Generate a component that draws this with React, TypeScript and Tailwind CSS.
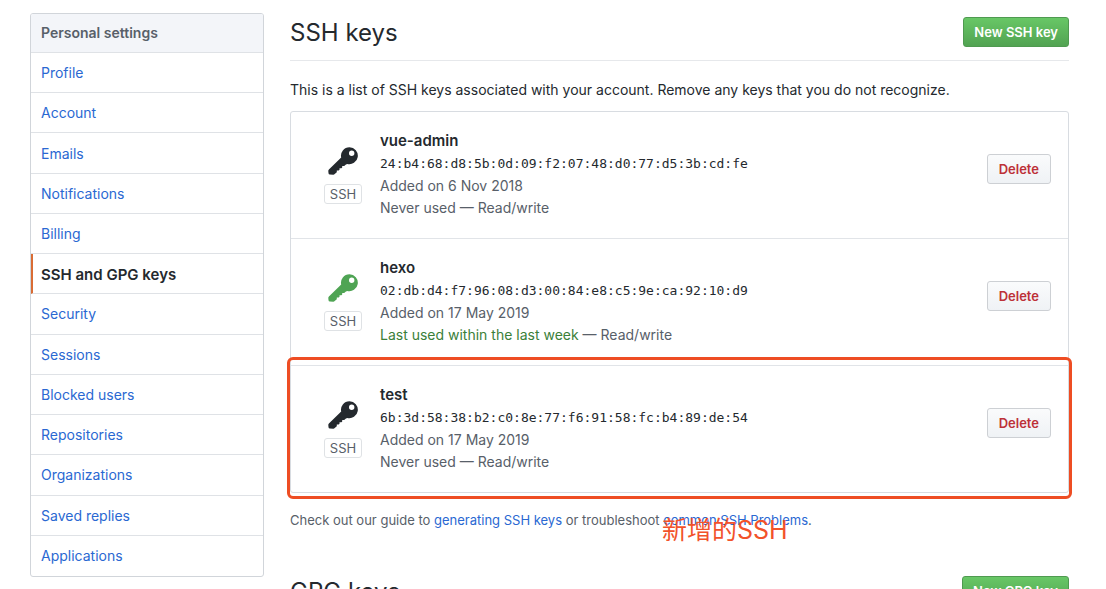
const navItems = [
  "Profile",
  "Account",
  "Emails",
  "Notifications",
  "Billing",
  "SSH and GPG keys",
  "Security",
  "Sessions",
  "Blocked users",
  "Repositories",
  "Organizations",
  "Saved replies",
  "Applications",
];

type SshKey = {
  name: string;
  fingerprint: string;
  added: string;
  lastUsed: string;
  recent?: boolean;
  note?: string;
};

const sshKeys: SshKey[] = [
  {
    name: "vue-admin",
    fingerprint: "24:b4:68:d8:5b:0d:09:f2:07:48:d0:77:d5:3b:cd:fe",
    added: "Added on 6 Nov 2018",
    lastUsed: "Never used",
  },
  {
    name: "hexo",
    fingerprint: "02:db:d4:f7:96:08:d3:00:84:e8:c5:9e:ca:92:10:d9",
    added: "Added on 17 May 2019",
    lastUsed: "Last used within the last week",
    recent: true,
  },
  {
    name: "test",
    fingerprint: "6b:3d:58:38:b2:c0:8e:77:f6:91:58:fc:b4:89:de:54",
    added: "Added on 17 May 2019",
    lastUsed: "Never used",
    note: "新增的SSH",
  },
];

function KeyIcon({ className }: { className: string }) {
  return (
    <svg viewBox="0 0 30 28" width="30" height="28" fill="currentColor" className={className} aria-hidden="true">
      <path
        fillRule="evenodd"
        d="M21.5 0.2a8.5 8.5 0 0 0-8.3 10.4L0.9 22.4a2 2 0 0 0-.6 1.6l.2 2.2a1.6 1.6 0 0 0 1.4 1.4l3.4.1a2 2 0 0 0 1.4-.6l2.1-1.9v-1.6h1.9l.8-.8v-1.5h1.9l.8-.9v-1.3h2l1.4-1.3 1.5-.9A8.5 8.5 0 1 0 21.5 0.2zM23.7 3.6a2.7 2.7 0 1 1 0 5.4a2.7 2.7 0 0 1 0-5.4z"
      />
    </svg>
  );
}

function SectionHeader({ title, action }: { title: string; action: string }) {
  return (
    <div className="flex items-start justify-between border-b border-[#e6e8eb] pb-[11px]">
      <h2 className="text-2xl leading-8">{title}</h2>
      <button
        type="button"
        className="h-[30px] rounded-[3px] border border-[#4f9a50] bg-linear-to-b from-[#68c766] to-[#52a352] px-[10px] pb-px text-[13px] leading-5 font-semibold text-white"
      >
        {action}
      </button>
    </div>
  );
}

function KeyRow({ item }: { item: SshKey }) {
  return (
    <li className="relative flex items-center pr-[17px] pl-[33px]">
      <div className="flex w-[38px] flex-col items-center gap-[9px]">
        <KeyIcon className={item.recent ? "text-[#4fa454]" : "text-[#24292e]"} />
        <span className="w-full rounded-[3px] border border-[#dfe2e5] text-center text-[13px] leading-[18px] text-[#586069]">
          SSH
        </span>
      </div>
      <div className="ml-[18px] flex-1 pt-[17px] pb-[19px] leading-[22px] text-[#586069]">
        <strong className="block text-[15px] leading-6 font-semibold text-[#24292e]">{item.name}</strong>
        <code className="block font-['DejaVu_Sans_Mono',monospace] text-[13px] leading-[22px] text-[#24292e]">
          {item.fingerprint}
        </code>
        <p>{item.added}</p>
        <p>
          <span className={item.recent ? "text-[#3b8039]" : ""}>{item.lastUsed}</span> — Read/write
        </p>
      </div>
      <button
        type="button"
        className="mb-3 h-[30px] rounded-[3px] border border-[#cdd0d4] bg-linear-to-b from-[#fafbfc] to-[#eff2f5] px-[11px] pb-px text-[13px] leading-5 font-semibold text-[#bd3138]"
      >
        Delete
      </button>
      {item.note && (
        <>
          <div className="pointer-events-none absolute -inset-x-1 -top-[9px] -bottom-[7px] rounded-md border-3 border-[#ee4d23]" />
          <span className="pointer-events-none absolute top-full left-[371px] mt-5 font-[Inter,'Noto_Sans_CJK_SC',sans-serif] text-[25px] leading-9 text-[#f2522a]">
            {item.note}
          </span>
        </>
      )}
    </li>
  );
}

export default function App() {
  return (
    <div className="flex h-screen items-start gap-[26px] overflow-hidden bg-white pr-[37px] pl-[30px] font-[Inter,'Noto_Sans_CJK_SC',sans-serif] text-sm text-[#24292e]">
      <nav
        aria-label="Personal settings"
        className="mt-[13px] grid min-h-[564px] w-[234px] shrink-0 auto-rows-fr grid-rows-[39px] divide-y divide-[#dfe2e6] overflow-hidden rounded-[3px] border border-[#d1d5da]"
      >
        <h1 className="flex items-center bg-[#f3f5f9] px-[10px] font-semibold text-[#586069]">Personal settings</h1>
        {navItems.map((label) => (
          <a
            key={label}
            href="#"
            className={
              label === "SSH and GPG keys"
                ? "flex items-center border-l-2 border-l-[#d96c34] pt-px pl-2 text-[15px] font-semibold"
                : "flex items-center px-[10px] pt-px text-[#2a68d2]"
            }
          >
            {label}
          </a>
        ))}
      </nav>

      <main className="min-w-0 flex-1 pt-[17px]">
        <SectionHeader title="SSH keys" action="New SSH key" />
        <p className="mt-[18px] leading-[22px]">
          This is a list of SSH keys associated with your account. Remove any keys that you do not recognize.
        </p>
        <ul className="mt-[10px] divide-y divide-[#e1e4e8] rounded-[3px] border border-[#d8dce1]">
          {sshKeys.map((item) => (
            <KeyRow key={item.name} item={item} />
          ))}
        </ul>
        <p className="mt-4 text-[13px] leading-[22px] text-[#586069]">
          Check out our guide to{" "}
          <a href="#" className="text-[#2a68d2]">
            generating SSH keys
          </a>{" "}
          or troubleshoot{" "}
          <a href="#" className="text-[#2a68d2]">
            common SSH Problems
          </a>
          .
        </p>
        <section className="mt-[45px]">
          <SectionHeader title="GPG keys" action="New GPG key" />
        </section>
      </main>
    </div>
  );
}
